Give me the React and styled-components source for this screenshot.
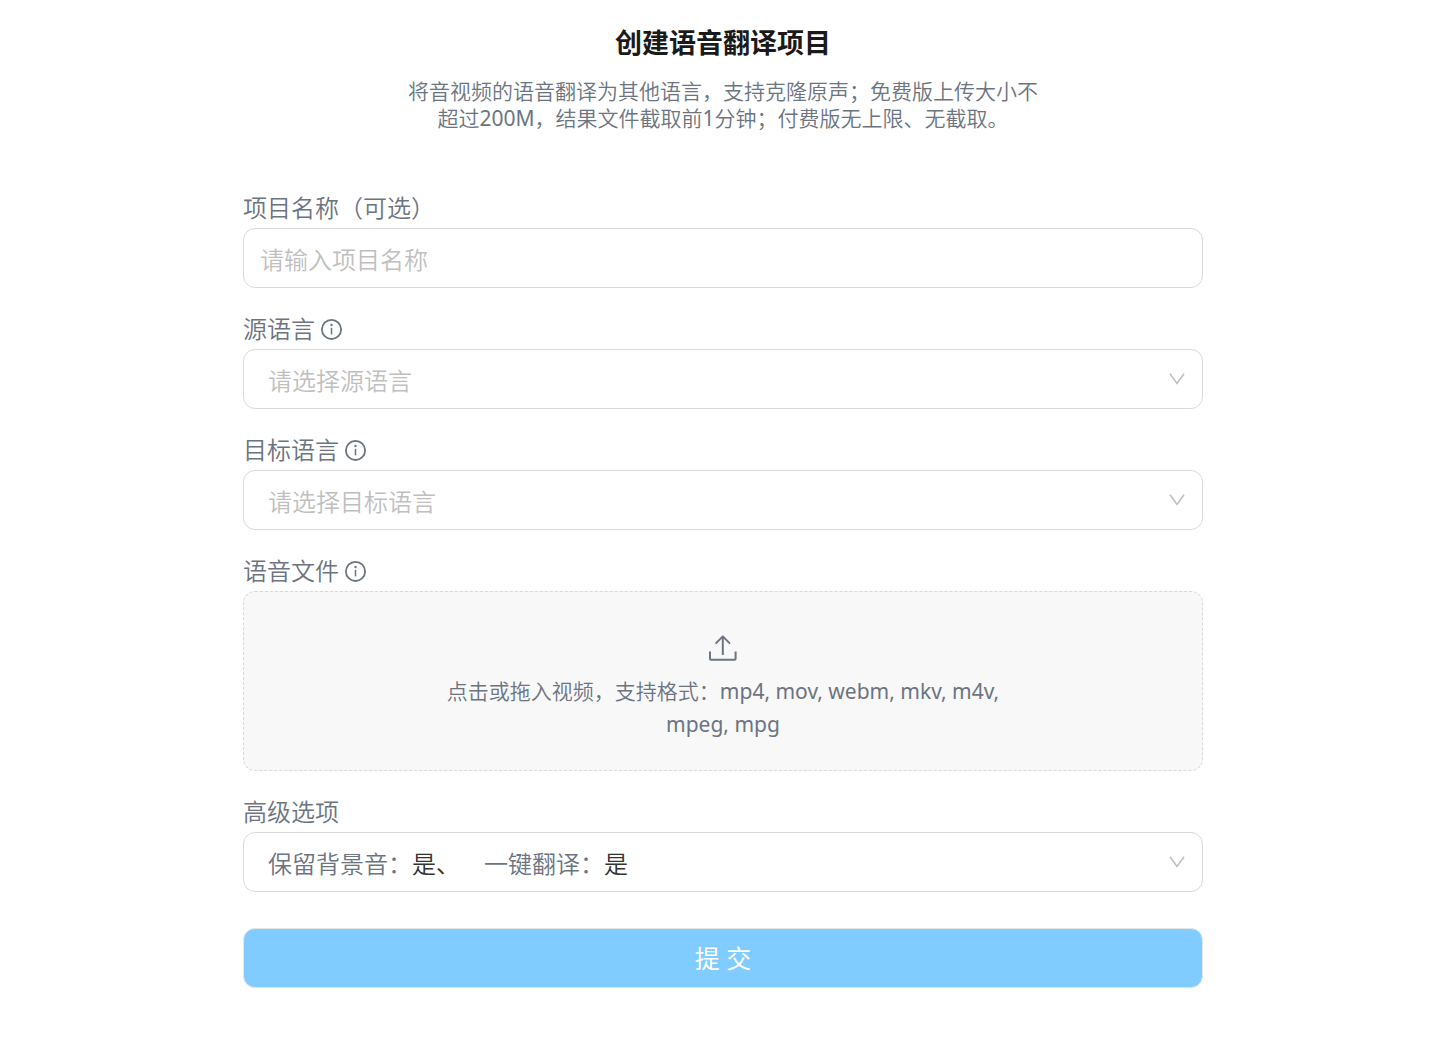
import React from "react";
import styled, { createGlobalStyle } from "styled-components";

const strongFont = `"Noto Sans", "Noto Sans CJK SC", sans-serif`;

const GlobalStyle = createGlobalStyle`
  *, *::before, *::after { box-sizing: border-box; }
  body {
    margin: 0;
    background: #fff;
    color: #6b7480;
    font-family: "Noto Sans", "Noto Sans CJK SC DemiLight", "Noto Sans CJK SC", sans-serif;
  }
  button, input, select { font: inherit; }
`;

const Page = styled.main`
  display: flex;
  flex-direction: column;
  align-items: center;
  padding: 24px 12px 48px 24px;
`;

const Header = styled.header`
  max-width: 640px;
  text-align: center;
`;

const Title = styled.h1`
  margin: 0 0 16px;
  color: #1a1a1a;
  font-family: ${strongFont};
  font-size: 27px;
  font-weight: 700;
  line-height: 38px;
`;

const Description = styled.p`
  margin: 0;
  font-size: 21px;
  line-height: 27px;
`;

const Form = styled.form`
  display: flex;
  flex-direction: column;
  gap: 25px;
  width: 100%;
  max-width: 960px;
  margin-top: 60px;
`;

const Field = styled.div`
  display: flex;
  flex-direction: column;
  gap: 4px;
  font-size: 24px;
`;

const LabelRow = styled.div`
  display: flex;
  align-items: center;
  gap: 6px;
  height: 32px;
  line-height: 32px;
`;

const TextInput = styled.input`
  width: 100%;
  height: 60px;
  padding: 2px 16px 0;
  border: 1px solid #d9d9d9;
  border-radius: 12px;
  background: #fff;
  color: #333;
  outline: none;

  &::placeholder { color: #bfbfbf; opacity: 1; }
  &:focus { border-color: #80cbff; }
`;

const SelectBox = styled.div`
  display: grid;
  align-items: center;

  > * { grid-area: 1 / 1; }
`;

const Select = styled.select`
  appearance: none;
  width: 100%;
  height: 60px;
  padding: 2px 48px 0 24px;
  border: 1px solid #d9d9d9;
  border-radius: 12px;
  background: transparent;
  color: #bfbfbf;
  outline: none;
`;

const OptionsButton = styled.button`
  display: flex;
  align-items: center;
  gap: 24px;
  width: 100%;
  height: 60px;
  padding: 0 48px 0 24px;
  border: 1px solid #d9d9d9;
  border-radius: 12px;
  background: transparent;
  color: inherit;
  text-align: left;
`;

const Value = styled.span`
  color: #333;
`;

const Arrow = styled.svg`
  justify-self: end;
  width: 16px;
  height: 12px;
  margin-right: 18px;
  fill: none;
  stroke: #bfbfbf;
  stroke-width: 1.6;
  pointer-events: none;
`;

const Info = styled.svg`
  width: 22px;
  height: 22px;
  fill: none;
  stroke: currentColor;
`;

const DropZone = styled.label`
  display: flex;
  flex-direction: column;
  align-items: center;
  gap: 13px;
  min-height: 180px;
  padding: 42px 24px 24px;
  border: 1px dashed #d9d9d9;
  border-radius: 12px;
  background: #f8f8f8;
  cursor: pointer;
`;

const UploadIcon = styled.svg`
  flex: none;
  width: 28px;
  height: 28px;
  fill: none;
  stroke: currentColor;
  stroke-width: 2;
  stroke-linejoin: round;
`;

const DropText = styled.span`
  max-width: 576px;
  font-size: 21px;
  line-height: 33px;
  text-align: center;
`;

const FileInput = styled.input`
  position: absolute;
  width: 1px;
  height: 1px;
  opacity: 0;
`;

const Submit = styled.button`
  width: 100%;
  height: 60px;
  margin-top: 11px;
  padding: 0 0 2px;
  border: 1px solid #e6e6e6;
  border-radius: 12px;
  background: #80cbff;
  color: #fff;
  font-family: ${strongFont};
  font-size: 25px;
`;

const InfoIcon = () => (
  <Info viewBox="0 0 22 22" aria-hidden="true">
    <circle cx="10.5" cy="11.4" r="9.6" strokeWidth="1.8" />
    <path d="M10.5 9.8V16.4" strokeWidth="1.5" />
    <circle cx="10.5" cy="7" r="1.2" fill="currentColor" stroke="none" />
  </Info>
);

const ArrowIcon = () => (
  <Arrow viewBox="0 0 16 12" aria-hidden="true">
    <path d="M1 0.8L8 10.4L15 0.8" />
  </Arrow>
);

const SelectField = ({ id, label, placeholder }) => (
  <Field>
    <LabelRow>
      <label htmlFor={id}>{label}</label>
      <InfoIcon />
    </LabelRow>
    <SelectBox>
      <Select id={id} defaultValue="">
        <option value="">{placeholder}</option>
      </Select>
      <ArrowIcon />
    </SelectBox>
  </Field>
);

export default function App() {
  return (
    <>
      <GlobalStyle />
      <Page>
        <Header>
          <Title>创建语音翻译项目</Title>
          <Description>
            将音视频的语音翻译为其他语言，支持克隆原声；免费版上传大小不超过200M，结果文件截取前1分钟；付费版无上限、无截取。
          </Description>
        </Header>
        <Form onSubmit={(e) => e.preventDefault()}>
          <Field>
            <LabelRow>
              <label htmlFor="name">项目名称（可选）</label>
            </LabelRow>
            <TextInput id="name" type="text" placeholder="请输入项目名称" />
          </Field>
          <SelectField id="source" label="源语言" placeholder="请选择源语言" />
          <SelectField id="target" label="目标语言" placeholder="请选择目标语言" />
          <Field>
            <LabelRow>
              <label htmlFor="file">语音文件</label>
              <InfoIcon />
            </LabelRow>
            <DropZone>
              <FileInput id="file" type="file" />
              <UploadIcon viewBox="0 0 28 28" aria-hidden="true">
                <path d="M1 17.5V24.7Q1 25.7 2 25.7H25.6Q26.6 25.7 26.6 24.7V17.5" />
                <path d="M13.8 21V2.4M6.6 9.6L13.8 2.4L21 9.6" />
              </UploadIcon>
              <DropText>
                点击或拖入视频，支持格式：mp4, mov, webm, mkv, m4v, mpeg, mpg
              </DropText>
            </DropZone>
          </Field>
          <Field>
            <LabelRow>
              <label htmlFor="advanced">高级选项</label>
            </LabelRow>
            <SelectBox>
              <OptionsButton id="advanced" type="button" aria-haspopup="dialog">
                <span>保留背景音：<Value>是、</Value></span>
                <span>一键翻译：<Value>是</Value></span>
              </OptionsButton>
              <ArrowIcon />
            </SelectBox>
          </Field>
          <Submit type="submit">提 交</Submit>
        </Form>
      </Page>
    </>
  );
}
